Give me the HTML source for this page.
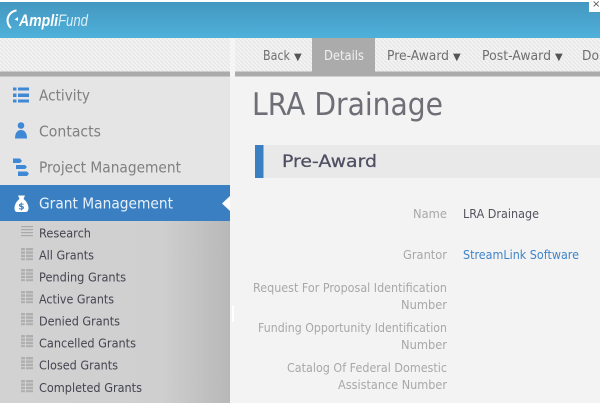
<!DOCTYPE html>
<html><head><meta charset="utf-8"><style>
html,body{margin:0;padding:0;width:600px;height:403px;overflow:hidden;background:#f3f3f3}
svg{display:block;filter:blur(.3px)}
text{font-family:"DejaVu Sans",sans-serif}
.lg text{font-family:"Liberation Sans",sans-serif}
</style></head><body>
<svg width="600" height="403" viewBox="0 0 600 403" xmlns="http://www.w3.org/2000/svg">
<defs>
<linearGradient id="h" x1="0" y1="0" x2="0" y2="1"><stop offset="0" stop-color="#4497c0"/><stop offset="1" stop-color="#4fb1da"/></linearGradient>
<linearGradient id="s" x1="0" y1="0" x2="1" y2="0"><stop offset="0" stop-color="#d2d2d2"/><stop offset=".7" stop-color="#cfcfcf"/><stop offset="1" stop-color="#b8b8b8"/></linearGradient>
<pattern id="p" width="4" height="4" patternUnits="userSpaceOnUse"><rect width="4" height="4" fill="#f2f2f2"/><path d="M0 0L4 4" stroke="#e6e6e6" stroke-width="1"/></pattern>
<g id="grid" fill="#afafaf"><rect x="0" y="0" width="4" height="2.4"/><rect x="5" y="0" width="7" height="2.4"/><rect x="0" y="3.4" width="4" height="2.4"/><rect x="5" y="3.4" width="7" height="2.4"/><rect x="0" y="6.8" width="4" height="2.4"/><rect x="5" y="6.8" width="7" height="2.4"/><rect x="0" y="10.2" width="4" height="2"/><rect x="5" y="10.2" width="7" height="2"/></g>
</defs>
<rect width="600" height="403" fill="#f3f3f3"/>
<rect width="600" height="2" fill="#fff"/>
<rect y="2" width="600" height="36" fill="url(#h)"/>
<rect x="589" y="0" width="11" height="12" fill="#fff"/>
<text x="592" y="7" font-size="10" fill="#555">×</text>
<path d="M16.500 10.500A10 10 0 0 0 11 28" fill="none" stroke="#fff" stroke-width="2"/>
<path d="M14.500 19.500l3.500-2.500v4z" fill="#fff"/>
<g class="lg">
<text x="19" y="26" font-size="17" font-weight="bold" font-style="italic" fill="#fff" textLength="39" lengthAdjust="spacingAndGlyphs">Ampli</text>
<text x="58" y="26" font-size="17" font-style="italic" fill="#dceef6" textLength="30" lengthAdjust="spacingAndGlyphs">Fund</text>
</g>

<rect y="38" width="600" height="34" fill="url(#p)"/>
<rect x="230" y="38" width="5" height="38" fill="#f5f5f5"/>
<rect x="0" y="71.500" width="230" height="5" fill="#ababab"/>
<rect x="235" y="71.500" width="365" height="5" fill="#ababab"/>
<rect x="312" y="38" width="63" height="34" fill="#ababab"/>
<g font-size="13">
<text x="263" y="60" fill="#6f6f6f" textLength="27" lengthAdjust="spacingAndGlyphs">Back</text><text x="294" y="60" font-size="10" fill="#555">▼</text>
<text x="324" y="60" fill="#f0f0f0" textLength="40" lengthAdjust="spacingAndGlyphs">Details</text>
<text x="387" y="60" fill="#6f6f6f" textLength="62" lengthAdjust="spacingAndGlyphs">Pre-Award</text><text x="453" y="60" font-size="10" fill="#555">▼</text>
<text x="482" y="60" fill="#6f6f6f" textLength="69" lengthAdjust="spacingAndGlyphs">Post-Award</text><text x="555" y="60" font-size="10" fill="#555">▼</text>
<text x="582" y="60" fill="#6f6f6f" textLength="17" lengthAdjust="spacingAndGlyphs">Do</text>
</g>

<rect x="0" y="76.500" width="230" height="108.500" fill="#e5e5e5"/>
<rect x="0" y="185" width="230" height="36" fill="#3a7fc1"/>
<path d="M230 196L222 203.500L230 211z" fill="#fff"/>
<rect x="0" y="221" width="230" height="182" fill="url(#s)"/>
<rect x="230" y="76" width="5" height="327" fill="#f3f3f3"/>

<g fill="#3e88d6">
<rect x="13" y="87.500" width="3.500" height="3"/><rect x="18" y="87.500" width="11" height="3"/>
<rect x="13" y="93.500" width="3.500" height="3.500"/><rect x="18" y="93.500" width="11" height="3.500"/>
<rect x="13" y="99.500" width="3.500" height="3"/><rect x="18" y="99.500" width="11" height="3"/>
<circle cx="21" cy="125.500" r="3.300"/>
<path d="M15 138.500C15 132 18 130 21 130S27 132 27 138.500z"/>
<path d="M13 158.500h7l2 2.500-2 2H13z"/>
<path d="M16 165h9l2 2-2 2h-9z"/>
<path d="M18 171.500h9l2 2.300-2 2.200h-9z"/>
</g>
<path d="M18 195.500h7l-1.500 3.500c3 2 5 6 5 9 0 3-1.500 4-3 4h-8c-2 0-3-1-3-4 0-3 2-7 5-9z" fill="#fff"/>
<text x="18.300" y="209.500" font-size="9" font-weight="bold" fill="#3a7fc1">$</text>

<g font-size="15.500">
<text x="39" y="100.500" fill="#808080" textLength="51" lengthAdjust="spacingAndGlyphs">Activity</text>
<text x="39" y="136.500" fill="#808080" textLength="62" lengthAdjust="spacingAndGlyphs">Contacts</text>
<text x="39" y="172.500" fill="#808080" textLength="142" lengthAdjust="spacingAndGlyphs">Project Management</text>
<text x="39" y="208.500" fill="#e8f1fa" textLength="134" lengthAdjust="spacingAndGlyphs">Grant Management</text>
</g>

<g fill="#a9a9a9"><rect x="21" y="226" width="12" height="1.200"/><rect x="21" y="229" width="12" height="1.200"/><rect x="21" y="232" width="12" height="1.200"/><rect x="21" y="235" width="12" height="1.200"/></g>
<use href="#grid" x="21" y="248"/><use href="#grid" x="21" y="269"/><use href="#grid" x="21" y="291"/><use href="#grid" x="21" y="313"/><use href="#grid" x="21" y="335"/><use href="#grid" x="21" y="357"/><use href="#grid" x="21" y="380"/>

<g font-size="12.500" fill="#444450">
<text x="39" y="237.500" textLength="52" lengthAdjust="spacingAndGlyphs">Research</text>
<text x="39" y="259.500" textLength="55" lengthAdjust="spacingAndGlyphs">All Grants</text>
<text x="39" y="281.500" textLength="87" lengthAdjust="spacingAndGlyphs">Pending Grants</text>
<text x="39" y="303.500" textLength="75" lengthAdjust="spacingAndGlyphs">Active Grants</text>
<text x="39" y="325.500" textLength="81" lengthAdjust="spacingAndGlyphs">Denied Grants</text>
<text x="39" y="347.500" textLength="97" lengthAdjust="spacingAndGlyphs">Cancelled Grants</text>
<text x="39" y="369.500" textLength="79" lengthAdjust="spacingAndGlyphs">Closed Grants</text>
<text x="39" y="392" textLength="103" lengthAdjust="spacingAndGlyphs">Completed Grants</text>
</g>

<text x="252" y="115" font-size="31" fill="#6e6e76" textLength="191" lengthAdjust="spacingAndGlyphs">LRA Drainage</text>
<rect x="255" y="145" width="345" height="33" fill="#e9e9e9"/>
<rect x="255" y="145" width="8.500" height="33" fill="#3a7fc1"/>
<text x="282" y="167" font-size="17" fill="#4f4f62" stroke="#4f4f62" stroke-width=".25" textLength="95" lengthAdjust="spacingAndGlyphs">Pre-Award</text>

<g font-size="12.500" fill="#a8a8a8">
<text x="413" y="218" textLength="34" lengthAdjust="spacingAndGlyphs">Name</text>
<text x="403" y="259" textLength="44" lengthAdjust="spacingAndGlyphs">Grantor</text>
<text x="253" y="292" textLength="194" lengthAdjust="spacingAndGlyphs">Request For Proposal Identification</text>
<text x="401" y="309" textLength="46" lengthAdjust="spacingAndGlyphs">Number</text>
<text x="258" y="332" textLength="189" lengthAdjust="spacingAndGlyphs">Funding Opportunity Identification</text>
<text x="401" y="349" textLength="46" lengthAdjust="spacingAndGlyphs">Number</text>
<text x="287" y="372" textLength="160" lengthAdjust="spacingAndGlyphs">Catalog Of Federal Domestic</text>
<text x="338" y="389" textLength="109" lengthAdjust="spacingAndGlyphs">Assistance Number</text>
</g>
<text x="463" y="218" font-size="12.500" fill="#54545e" textLength="76" lengthAdjust="spacingAndGlyphs">LRA Drainage</text>
<text x="463" y="259" font-size="12.500" fill="#3f85c8" textLength="116" lengthAdjust="spacingAndGlyphs">StreamLink Software</text>
<rect x="232" y="306" width="2" height="16" fill="#fff"/>
</svg>
</body></html>
